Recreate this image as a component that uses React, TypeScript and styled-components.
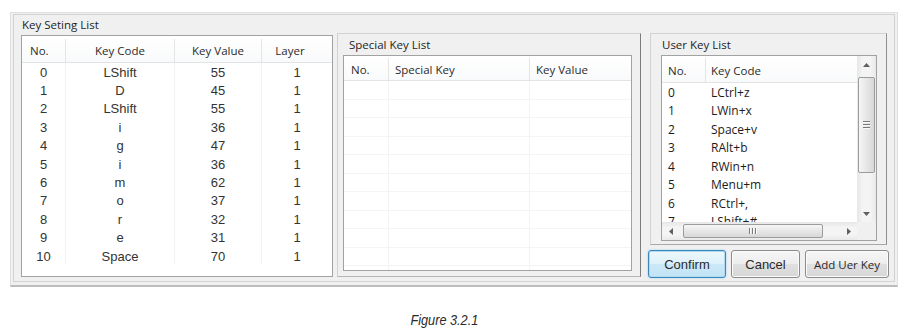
import React from 'react';
import styled, { createGlobalStyle, css } from 'styled-components';

const UI_FONT = `'Open Sans', 'Noto Sans', sans-serif`;
const DATA_FONT = `'Liberation Sans', Arial, sans-serif`;

type Align = 'left' | 'center';

interface Column {
  title: string;
  width?: number;
  head: Align;
  body: Align;
  pad: number;
  padRight?: number;
}

const LEFT_COLUMNS: Column[] = [
  { title: 'No.', width: 44, head: 'left', body: 'center', pad: 8 },
  { title: 'Key Code', width: 109, head: 'center', body: 'center', pad: 0 },
  { title: 'Key Value', width: 87, head: 'center', body: 'center', pad: 0 },
  { title: 'Layer', head: 'center', body: 'center', pad: 0, padRight: 14 },
];

const LEFT_ROWS = [
  ['0', 'LShift', '55', '1'],
  ['1', 'D', '45', '1'],
  ['2', 'LShift', '55', '1'],
  ['3', 'i', '36', '1'],
  ['4', 'g', '47', '1'],
  ['5', 'i', '36', '1'],
  ['6', 'm', '62', '1'],
  ['7', 'o', '37', '1'],
  ['8', 'r', '32', '1'],
  ['9', 'e', '31', '1'],
  ['10', 'Space', '70', '1'],
];

const SPECIAL_COLUMNS: Column[] = [
  { title: 'No.', width: 45, head: 'left', body: 'left', pad: 7 },
  { title: 'Special Key', width: 141, head: 'left', body: 'left', pad: 6 },
  { title: 'Key Value', head: 'left', body: 'left', pad: 6 },
];

const SPECIAL_ROWS = Array.from({ length: 11 }, () => ['', '', '']);

const USER_COLUMNS: Column[] = [
  { title: 'No.', width: 44, head: 'left', body: 'left', pad: 6 },
  { title: 'Key Code', head: 'left', body: 'left', pad: 5 },
];

// the last row is only half visible above the horizontal scrollbar
const USER_ROWS = [
  ['0', 'LCtrl+z'],
  ['1', 'LWin+x'],
  ['2', 'Space+v'],
  ['3', 'RAlt+b'],
  ['4', 'RWin+n'],
  ['5', 'Menu+m'],
  ['6', 'RCtrl+,'],
  ['7', 'LShift+#'],
];

const GlobalStyle = createGlobalStyle`
  html, body {
    margin: 0;
    padding: 0;
    background: #fff;
  }

  body {
    font-family: ${UI_FONT};
    color: #1e1e1e;
  }
`;

const Page = styled.div`
  padding: 12px 0 0 10px;
`;

const Window = styled.div`
  box-sizing: border-box;
  width: 888px;
  padding: 1px 2px 3px 2px;
  background: #f0f0f0;
  border: 1px solid #e0e0e0;
  border-bottom: 2px solid #bcbcbc;
`;

const Panel = styled.div<{ $w?: number; $ml?: number; $pad: string; $right: string; $bottom: string }>`
  box-sizing: border-box;
  flex: none;
  ${(p) => (p.$w ? `width: ${p.$w}px;` : '')}
  margin-left: ${(p) => p.$ml ?? 0}px;
  padding: ${(p) => p.$pad};
  border: 1px solid #d2d2d2;
  border-right-color: ${(p) => p.$right};
  border-bottom-color: ${(p) => p.$bottom};
`;

const PanelLabel = styled.div<{ $h: number; $indent: number }>`
  font-family: ${UI_FONT};
  font-size: 11.5px;
  line-height: ${(p) => p.$h}px;
  padding-left: ${(p) => p.$indent}px;
  color: #1e1e1e;
  white-space: nowrap;
`;

const PanelRow = styled.div`
  display: flex;
  align-items: flex-start;
  gap: 4px;
`;

const RightColumn = styled.div`
  flex: none;
  width: 242px;
  margin-left: 3px;
  display: flex;
  flex-direction: column;
  align-items: flex-start;
`;

const ListBox = styled.div<{ $w: number; $h: number; $mt?: number }>`
  box-sizing: border-box;
  flex: none;
  width: ${(p) => p.$w}px;
  height: ${(p) => p.$h}px;
  margin-top: ${(p) => p.$mt ?? 0}px;
  background: #fff;
  border: 1px solid #a2a2a2;
  overflow: hidden;
  display: flex;
  flex-direction: column;
`;

const ListMain = styled.div`
  flex: 1;
  min-height: 0;
  display: flex;
`;

const ListContent = styled.div`
  flex: 1;
  min-width: 0;
  overflow: hidden;
  display: flex;
  flex-direction: column;
`;

const Header = styled.div<{ $h: number; $top: number }>`
  flex: none;
  display: flex;
  box-sizing: border-box;
  height: ${(p) => p.$h}px;
  padding-top: ${(p) => p.$top}px;
  border-bottom: 1px solid #e3e3e3;
  background: linear-gradient(#ffffff, #f9fafb);
  font-family: ${UI_FONT};
  font-size: 11.5px;
  color: #2b2b2b;
`;

const cellWidth = css<{ $w?: number }>`
  box-sizing: border-box;
  ${(p) => (p.$w ? `width: ${p.$w}px; flex: none;` : 'flex: 1;')}
`;

const HeadCell = styled.div<{ $w?: number; $align: Align; $pad: number; $padR: number }>`
  ${cellWidth}
  display: flex;
  align-items: center;
  justify-content: ${(p) => (p.$align === 'center' ? 'center' : 'flex-start')};
  padding-left: ${(p) => p.$pad}px;
  padding-right: ${(p) => p.$padR}px;
  border-right: 1px solid #e5e5e5;
  white-space: nowrap;

  &:last-child {
    border-right: none;
  }
`;

const Body = styled.div<{ $font: 'data' | 'ui' }>`
  flex: 1;
  overflow: hidden;
  font-family: ${(p) => (p.$font === 'data' ? DATA_FONT : UI_FONT)};
  font-size: ${(p) => (p.$font === 'data' ? '13px' : '12px')};
  color: ${(p) => (p.$font === 'data' ? '#333' : '#1c1c1c')};
`;

const Row = styled.div<{ $h: number; $grid: boolean }>`
  display: flex;
  box-sizing: border-box;
  height: ${(p) => p.$h}px;
  ${(p) => (p.$grid ? 'border-bottom: 1px solid #f4f4f4;' : '')}
`;

const Cell = styled.div<{ $w?: number; $align: Align; $pad: number; $line: string }>`
  ${cellWidth}
  display: flex;
  align-items: center;
  justify-content: ${(p) => (p.$align === 'center' ? 'center' : 'flex-start')};
  padding-left: ${(p) => (p.$align === 'left' ? p.$pad : 0)}px;
  border-right: 1px solid ${(p) => p.$line};
  white-space: nowrap;

  &:last-child {
    border-right: none;
  }
`;

const VScroll = styled.div`
  flex: none;
  width: 19px;
  display: flex;
  flex-direction: column;
  align-items: center;
  background: linear-gradient(to right, #e6e6e6, #f4f4f4 30%, #f4f4f4 70%, #e9e9e9);
`;

const HScroll = styled.div`
  flex: 1;
  display: flex;
  align-items: center;
  background: linear-gradient(#e6e6e6, #f4f4f4 30%, #f4f4f4 70%, #e9e9e9);
`;

const ScrollBottom = styled.div`
  flex: none;
  height: 18px;
  display: flex;
`;

const Corner = styled.div`
  flex: none;
  width: 19px;
  background: #f0f0f0;
`;

const ScrollBtn = styled.div<{ $w: number; $h: number }>`
  flex: none;
  width: ${(p) => p.$w}px;
  height: ${(p) => p.$h}px;
  display: flex;
  align-items: center;
  justify-content: center;
`;

const Filler = styled.div`
  flex: 1;
`;

const Thumb = styled.div<{ $vertical: boolean }>`
  flex: none;
  box-sizing: border-box;
  display: flex;
  align-items: center;
  justify-content: center;
  gap: 1px;
  border: 1px solid #9c9c9c;
  border-radius: 2px;
  ${(p) =>
    p.$vertical
      ? css`
          width: 17px;
          height: 96px;
          margin-top: 4px;
          flex-direction: column;
          background: linear-gradient(to right, #f6f6f6, #e8e8e8 45%, #d8d8d8);
        `
      : css`
          width: 140px;
          height: 14px;
          margin-left: 4px;
          flex-direction: row;
          background: linear-gradient(#f6f6f6, #e8e8e8 45%, #d8d8d8);
        `}
`;

const Grip = styled.span<{ $vertical: boolean }>`
  display: block;
  background: #7c7c7c;
  ${(p) =>
    p.$vertical
      ? 'width: 7px; height: 1px; box-shadow: 0 1px 0 #fafafa;'
      : 'width: 1px; height: 6px; box-shadow: 1px 0 0 #fafafa;'}
  margin: ${(p) => (p.$vertical ? '0 0 1px 0' : '0 1px 0 0')};
`;

const ButtonRow = styled.div`
  display: flex;
  gap: 5px;
  margin-top: 5px;
`;

const Button = styled.button<{ $w: number; $primary?: boolean; $ui?: boolean }>`
  box-sizing: border-box;
  width: ${(p) => p.$w}px;
  height: 28px;
  padding: 0;
  border-radius: 3px;
  font-family: ${(p) => (p.$ui ? UI_FONT : DATA_FONT)};
  font-size: ${(p) => (p.$ui ? '11.5px' : '13px')};
  color: #2a2a2a;
  white-space: nowrap;
  ${(p) =>
    p.$primary
      ? css`
          border: 1px solid #3c86b8;
          background: linear-gradient(#eef8fd, #ddf1fb 50%, #cbe8f7 51%, #c2e4f5);
          box-shadow: inset 0 0 0 1px #aedbf3, 0 0 2px #8ccaec;
        `
      : css`
          border: 1px solid #8c8c8c;
          background: linear-gradient(#f6f6f6, #ededed 50%, #e0e0e0 51%, #d7d7d7);
          box-shadow: inset 0 0 0 1px #fbfbfb;
        `}
`;

const Caption = styled.div`
  box-sizing: border-box;
  width: 888px;
  margin-top: 22px;
  padding-right: 20px;
  text-align: center;
  line-height: 20px;
`;

const CaptionText = styled.span`
  display: inline-block;
  font-family: ${DATA_FONT};
  font-style: italic;
  font-size: 15.5px;
  color: #2a2a2a;
  transform: scaleX(0.82);
`;

type Dir = 'up' | 'down' | 'left' | 'right';

const Arrow: React.FC<{ dir: Dir }> = ({ dir }) => {
  const vertical = dir === 'up' || dir === 'down';
  const points = {
    up: '0,4 3.5,0 7,4',
    down: '0,0 7,0 3.5,4',
    left: '4,0 4,7 0,3.5',
    right: '0,0 0,7 4,3.5',
  }[dir];
  return (
    <svg width={vertical ? 7 : 4} height={vertical ? 4 : 7} viewBox={vertical ? '0 0 7 4' : '0 0 4 7'}>
      <polygon points={points} fill='#606060' />
    </svg>
  );
};

interface TableProps {
  columns: Column[];
  rows: string[][];
  headH: number;
  headTop: number;
  rowH: number;
  font: 'data' | 'ui';
  grid?: boolean;
  line?: string;
}

const Table: React.FC<TableProps> = (props) => {
  const { columns, rows, headH, headTop, rowH, font, grid = false, line = 'transparent' } = props;

  return (
    <>
      <Header $h={headH} $top={headTop}>
        {columns.map((col) => (
          <HeadCell key={col.title} $w={col.width} $align={col.head} $pad={col.head === 'left' ? col.pad : 0} $padR={col.padRight ?? 0}>
            {col.title}
          </HeadCell>
        ))}
      </Header>
      <Body $font={font}>
        {rows.map((row, i) => (
          <Row key={i} $h={rowH} $grid={grid}>
            {columns.map((col, j) => (
              <Cell key={col.title} $w={col.width} $align={col.body} $pad={col.pad} $line={line}>
                {row[j]}
              </Cell>
            ))}
          </Row>
        ))}
      </Body>
    </>
  );
};

const ScrollableList: React.FC = () => (
  <ListBox $w={216} $h={186}>
    <ListMain>
      <ListContent>
        <Table columns={USER_COLUMNS} rows={USER_ROWS} headH={27} headTop={2} rowH={18.5} font='ui' />
      </ListContent>
      <VScroll>
        <ScrollBtn $w={19} $h={17}><Arrow dir='up' /></ScrollBtn>
        <Thumb $vertical>
          <Grip $vertical />
          <Grip $vertical />
          <Grip $vertical />
        </Thumb>
        <Filler />
        <ScrollBtn $w={19} $h={17}><Arrow dir='down' /></ScrollBtn>
      </VScroll>
    </ListMain>
    <ScrollBottom>
      <HScroll>
        <ScrollBtn $w={17} $h={18}><Arrow dir='left' /></ScrollBtn>
        <Thumb $vertical={false}>
          <Grip $vertical={false} />
          <Grip $vertical={false} />
          <Grip $vertical={false} />
        </Thumb>
        <Filler />
        <ScrollBtn $w={17} $h={18}><Arrow dir='right' /></ScrollBtn>
      </HScroll>
      <Corner />
    </ScrollBottom>
  </ListBox>
);

const App: React.FC = () => (
  <Page>
    <GlobalStyle />
    <Window>
      <Panel $pad='1px 3px 3px 7px' $right='#d2d2d2' $bottom='#d2d2d2'>
        <PanelLabel $h={17} $indent={1}>{'Key Seting List'}</PanelLabel>
        <PanelRow>
          <ListBox $w={312} $h={242} $mt={2}>
            <Table columns={LEFT_COLUMNS} rows={LEFT_ROWS} headH={27} headTop={3} rowH={18.4} font='data' line='#f3f3f3' />
          </ListBox>

          <Panel $w={304} $pad='0 8px 5px 5px' $right='#7d7d7d' $bottom='#b5b5b5'>
            <PanelLabel $h={21} $indent={6}>{'Special Key List'}</PanelLabel>
            <ListBox $w={289} $h={216}>
              <Table columns={SPECIAL_COLUMNS} rows={SPECIAL_ROWS} headH={25} headTop={2} rowH={18.5} font='ui' grid line='#f3f3f3' />
            </ListBox>
          </Panel>

          <RightColumn>
            <Panel $w={237} $ml={2} $pad='0 9px 3px 10px' $right='#8f8f8f' $bottom='#a8a8a8'>
              <PanelLabel $h={21} $indent={1}>{'User Key List'}</PanelLabel>
              <ScrollableList />
            </Panel>
            <ButtonRow>
              <Button $w={78} $primary>{'Confirm'}</Button>
              <Button $w={69}>{'Cancel'}</Button>
              <Button $w={84} $ui>{'Add Uer Key'}</Button>
            </ButtonRow>
          </RightColumn>
        </PanelRow>
      </Panel>
    </Window>
    <Caption>
      <CaptionText>{'Figure 3.2.1'}</CaptionText>
    </Caption>
  </Page>
);

export default App;
